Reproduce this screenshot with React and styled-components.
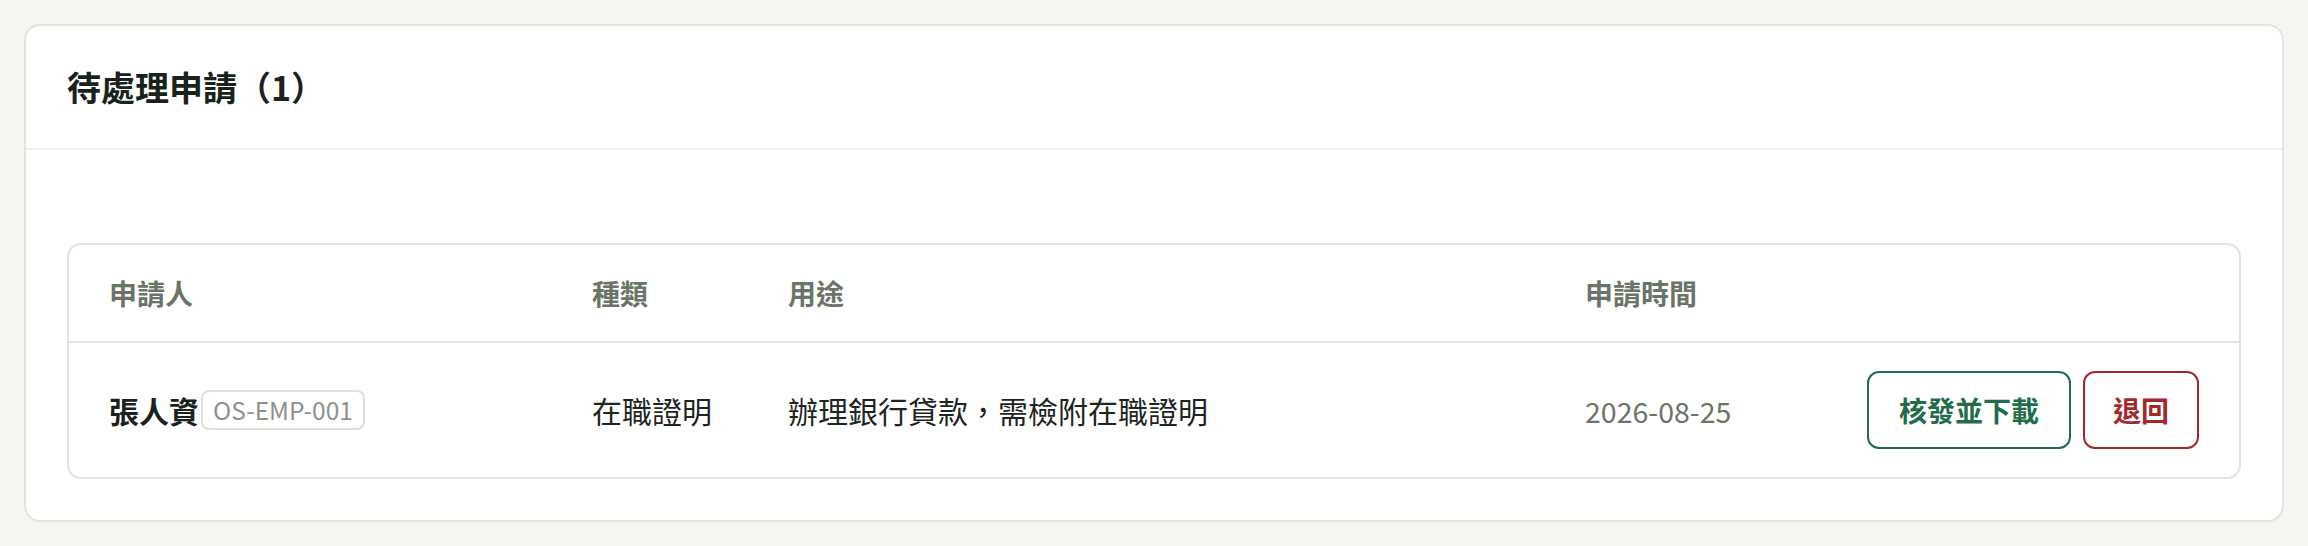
import React from "react";
import styled, { createGlobalStyle } from "styled-components";

const GlobalStyle = createGlobalStyle`
  html, body {
    margin: 0;
    padding: 0;
    background: #f5f6f1;
  }
  body {
    font-family: "Noto Sans CJK TC", "Noto Sans", sans-serif;
    color: #1d251f;
  }
`;

const Page = styled.div`
  padding: 24px;
`;

const Panel = styled.section`
  background: #ffffff;
  border: 2px solid #e0e5dd;
  border-radius: 16px;
`;

const PanelHeader = styled.header`
  padding: 35px 41px 36px;
  border-bottom: 2px solid #eef0ec;
`;

const Title = styled.h2`
  margin: 0;
  font-size: 34px;
  line-height: 51px;
  font-weight: 700;
  color: #1a221c;
`;

const PanelBody = styled.div`
  padding: 93px 41px 41px;
`;

const TableFrame = styled.div`
  border: 2px solid #dfe4dc;
  border-radius: 14px;
  overflow: hidden;
`;

const Row = styled.div`
  display: grid;
  grid-template-columns: 483px 196px 797px 282px 1fr;
  align-items: center;
  & + & {
    border-top: 2px solid #dfe4dc;
  }
`;

const HeadCell = styled.div`
  padding: 27px 40px;
  font-size: 28px;
  line-height: 42px;
  font-weight: 700;
  color: #6b7567;
  white-space: nowrap;
`;

const Cell = styled.div`
  padding: 28px 40px;
  font-size: ${(p) => (p.$muted ? "28.5px" : "30px")};
  line-height: 45px;
  font-weight: 400;
  color: ${(p) => (p.$muted ? "#6b7567" : "#1d251f")};
  white-space: nowrap;
  display: flex;
  align-items: center;
  justify-content: ${(p) => (p.$end ? "flex-end" : "flex-start")};
  gap: ${(p) => (p.$end ? "12px" : "0")};
`;

const Name = styled.span`
  font-weight: 700;
  color: #1a221c;
`;

const EmpTag = styled.span`
  margin-left: 2px;
  padding: 0 10px;
  border: 2px solid #dde2d9;
  border-radius: 8px;
  font-size: 24.5px;
  line-height: 36px;
  font-weight: 400;
  color: #8b938b;
`;

const ActionButton = styled.button`
  font-family: inherit;
  font-size: 28px;
  line-height: 42px;
  font-weight: 700;
  padding: 16px ${(p) => (p.$tone === "danger" ? "28px" : "30px")};
  background: #ffffff;
  border: 2px solid ${(p) => (p.$tone === "danger" ? "#a3292c" : "#1f6d4a")};
  color: ${(p) => (p.$tone === "danger" ? "#a3292c" : "#1f6d4a")};
  border-radius: 12px;
  cursor: pointer;
`;

const requests = [
  {
    name: "張人資",
    empId: "OS-EMP-001",
    type: "在職證明",
    purpose: "辦理銀行貸款，需檢附在職證明",
    date: "2026-08-25",
  },
];

export default function App() {
  return (
    <>
      <GlobalStyle />
      <Page>
        <Panel>
          <PanelHeader>
            <Title>待處理申請（{requests.length}）</Title>
          </PanelHeader>
          <PanelBody>
            <TableFrame>
              <Row>
                <HeadCell>申請人</HeadCell>
                <HeadCell>種類</HeadCell>
                <HeadCell>用途</HeadCell>
                <HeadCell>申請時間</HeadCell>
                <HeadCell />
              </Row>
              {requests.map((r) => (
                <Row key={r.empId}>
                  <Cell>
                    <Name>{r.name}</Name>
                    <EmpTag>{r.empId}</EmpTag>
                  </Cell>
                  <Cell>{r.type}</Cell>
                  <Cell>{r.purpose}</Cell>
                  <Cell $muted>{r.date}</Cell>
                  <Cell $end>
                    <ActionButton>核發並下載</ActionButton>
                    <ActionButton $tone="danger">退回</ActionButton>
                  </Cell>
                </Row>
              ))}
            </TableFrame>
          </PanelBody>
        </Panel>
      </Page>
    </>
  );
}
